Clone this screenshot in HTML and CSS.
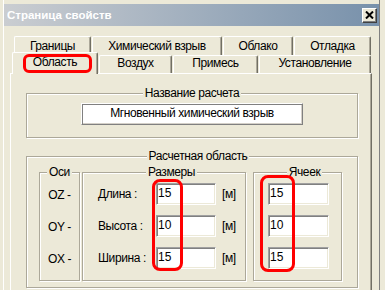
FILE: index.html
```html
<!DOCTYPE html>
<html lang="ru">
<head>
  <meta charset="UTF-8" />
  <title>Страница свойств</title>
  <link rel="stylesheet" href="styles.css">
</head>
<body>
  <div class="window">
    <div class="titlebar">
      <span class="title">Страница свойств</span>
      <div class="close">
        <svg width="9" height="8" viewBox="0 0 9 8"><path d="M1 0.5 L8 7.5 M8 0.5 L1 7.5" stroke="#000" stroke-width="2"/></svg>
      </div>
    </div>

    <div class="tabs tabs-back">
      <div class="tab t-borders">Границы</div>
      <div class="tab t-chem">Химический взрыв</div>
      <div class="tab t-cloud">Облако</div>
      <div class="tab t-debug">Отладка</div>
    </div>
    <div class="tabs tabs-front">
      <div class="tab t-area active">Область<span class="mark mark-tab"></span></div>
      <div class="tab t-air">Воздух</div>
      <div class="tab t-admix">Примесь</div>
      <div class="tab t-setup">Установление</div>
    </div>

    <div class="panel">
      <fieldset class="group name-group">
        <legend>Название расчета</legend>
        <div class="name-field">Мгновенный химический взрыв</div>
      </fieldset>

      <fieldset class="group calc-group">
        <legend>Расчетная область</legend>
        <div class="calc-cols">
          <fieldset class="group inner axes">
            <legend>Оси</legend>
            <div class="rows">
              <div class="axis">OZ -</div>
              <div class="axis">OY -</div>
              <div class="axis">OX -</div>
            </div>
          </fieldset>

          <fieldset class="group inner sizes">
            <legend>Размеры</legend>
            <div class="sizes-grid">
              <span>Длина :</span><input class="field" value="15" readonly><span class="unit">[м]</span>
              <span>Высота :</span><input class="field" value="10" readonly><span class="unit">[м]</span>
              <span>Ширина :</span><input class="field" value="15" readonly><span class="unit">[м]</span>
              <span class="mark mark-sizes"></span>
            </div>
          </fieldset>

          <fieldset class="group inner cells">
            <legend>Ячеек</legend>
            <div class="cells-col">
              <input class="field" value="15" readonly>
              <input class="field" value="10" readonly>
              <input class="field" value="15" readonly>
              <span class="mark mark-cells"></span>
            </div>
          </fieldset>
        </div>
      </fieldset>
    </div>
  </div>
</body>
</html>
```

FILE: styles.css
```css
* { box-sizing: border-box; }
body { margin: 0; background: #ece9d8; font-family: "Liberation Sans", Arial, sans-serif; font-size: 12px; letter-spacing: -0.4px; color: #000; overflow: hidden; }

.window { width: 377px; height: 290px; margin-left: 3px; padding-top: 4px; border-left: 1px solid #fff; border-right: 1px solid #808080; }

.titlebar { display: flex; align-items: center; height: 22px; padding: 0 2px 0 3px; background: linear-gradient(to right, #cacdd1, #7891ab); }
.title { flex: 1; color: #fff; font-weight: bold; font-size: 11.5px; letter-spacing: 0; }
.close { width: 15px; height: 15px; display: flex; align-items: center; justify-content: center; background: #ece9d8; border: 1px solid; border-color: #fff #404040 #404040 #fff; box-shadow: inset -1px -1px #808080; }

.tabs { display: flex; gap: 1px; }
.tabs-back { margin: 10px 0 0 10px; height: 19px; }
.tabs-front { margin: -3px 0 0 8px; height: 22px; align-items: flex-start; position: relative; z-index: 1; }
.tab { text-align: center; white-space: nowrap; background: #ece9d8; border-top: 1px solid #fff; border-left: 1px solid #fff; border-right: 1px solid #716f64; box-shadow: inset -1px 0 #aca899; border-radius: 2px 2px 0 0; }
.tabs-back .tab { height: 19px; line-height: 18px; }
.tabs-front .tab { height: 18px; margin-top: 3px; line-height: 15px; }
.tabs-front .tab.active { height: 22px; margin-top: 0; line-height: 18px; position: relative; }

.t-borders { width: 77px; }
.t-chem { width: 130px; }
.t-cloud { width: 70px; }
.t-debug { width: 77px; }
.t-area { width: 86px; }
.t-air { width: 73px; }
.t-admix { width: 85px; }
.t-setup { width: 112px; }

.panel { margin: -1px 0 0 6px; width: 362px; height: 230px; border-top: 1px solid #fff; border-left: 1px solid #fff; border-right: 1px solid #716f64; box-shadow: inset -1px 0 #aca899; }

.group { margin: 0; padding: 0; min-width: 0; border: 1px solid #aca899; box-shadow: 1px 1px 0 #fff, inset 1px 1px 0 #fff; }
.group > legend { margin: 0 auto; padding: 0 2px; line-height: 14px; background: #ece9d8; }

.name-group { margin: 12px 0 0 15px; width: 332px; padding: 3px 0 12px; }
.name-field { width: 222px; height: 22px; margin: 0 auto; background: #fff; text-align: center; line-height: 19px; border: 1px solid; border-color: #fff #808080 #808080 #fff; box-shadow: inset 1px 1px #808080, inset -1px -1px #d4d0c8; }

.calc-group { margin: 11px 0 0 15px; width: 332px; padding: 2px 0 6px 12px; }
.calc-cols { display: flex; }
.inner { padding-top: 4px; padding-bottom: 11px; }
.axes { width: 41px; }
.sizes { width: 164px; margin-left: 2px; padding-left: 15px; }
.cells { width: 89px; margin-left: 7px; padding-left: 14px; }

.rows { display: flex; flex-direction: column; gap: 10px; }
.axis { height: 22px; line-height: 24px; text-align: center; }

.sizes-grid { display: grid; grid-template-columns: 58px 60px auto; grid-auto-rows: 22px; row-gap: 10px; align-items: center; position: relative; }
.sizes-grid span { line-height: 26px; }
.unit { padding-left: 6px; }

.cells-col { display: flex; flex-direction: column; gap: 10px; width: 61px; position: relative; }

.field { width: 100%; height: 22px; margin: 0; padding: 0 0 2px 1px; font: inherit; letter-spacing: 0; color: #000; background: #fff; outline: none; border: 1px solid; border-color: #a0a0a0 #fff #fff #a0a0a0; box-shadow: inset 1px 1px #808080, inset -1px -1px #ece9d8; }

.mark { position: absolute; border: 3px solid #f00; border-radius: 8px; pointer-events: none; }
.mark-tab { left: 10px; top: 1px; width: 69px; height: 19px; border-radius: 6px; }
.mark-sizes { grid-column: 2; grid-row: 1 / 4; left: -4px; top: -4px; width: 31px; bottom: -2px; }
.mark-cells { left: -8px; top: -8px; width: 35px; bottom: -3px; }
```
